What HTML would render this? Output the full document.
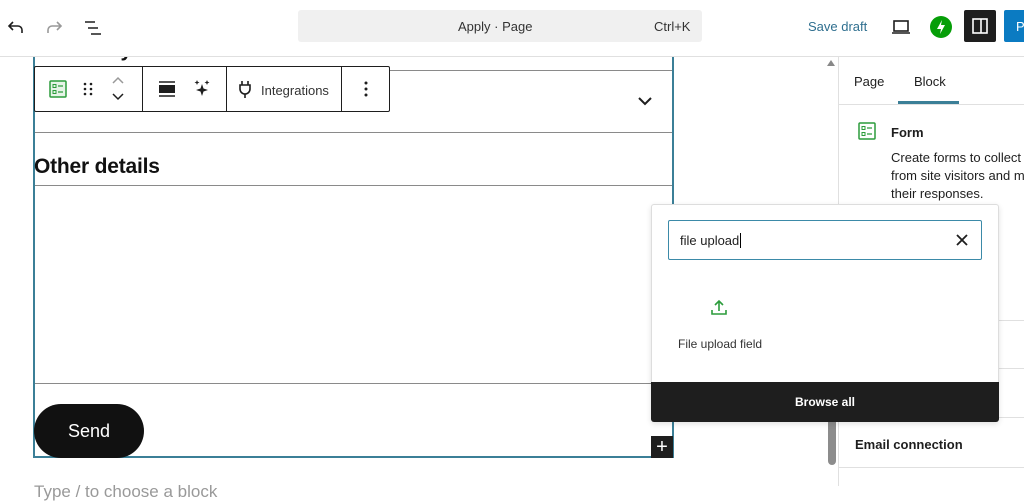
<!DOCTYPE html>
<html><head><style>
*{box-sizing:border-box;margin:0;padding:0}
body{width:1024px;height:486px;overflow:hidden;background:#fff;font-family:"Liberation Sans",sans-serif;position:relative;color:#1e1e1e}
.a{position:absolute}
.hl{position:absolute;height:1px;background:#8a8a8a}
.hd{z-index:10}
</style></head><body>
<!-- canvas -->
<div class="a" style="left:33px;top:38px;font-size:21px;font-weight:bold;color:#111">How did you hear about us?</div>
<div class="a" style="left:33px;top:46px;width:641px;height:412px;border:2px solid #3b7f97;border-top:none"></div>
<div class="hl" style="left:35px;top:70px;width:637px"></div>
<div class="hl" style="left:35px;top:132px;width:637px"></div>
<div class="hl" style="left:35px;top:185px;width:637px"></div>
<div class="hl" style="left:35px;top:383px;width:637px"></div>
<svg class="a" style="left:636px;top:95px" width="18" height="14" viewBox="0 0 18 14"><path d="M3 3l6 6 6-6" fill="none" stroke="#1e1e1e" stroke-width="2"/></svg>
<div class="a" style="left:34px;top:155px;font-size:21px;font-weight:bold;color:#111;letter-spacing:-0.2px">Other details</div>
<div class="a" style="left:34px;top:404px;width:110px;height:54px;border-radius:27px;background:#111;color:#fff;font-size:18px;text-align:center;line-height:54px">Send</div>
<div class="a" style="left:651px;top:436px;width:22px;height:22px;background:#1e1e1e;color:#fff;font-size:20px;text-align:center;line-height:22px">+</div>
<div class="a" style="left:34px;top:482px;font-size:17px;color:#999">Type / to choose a block</div>

<!-- header -->
<div class="a hd" style="left:0;top:0;width:1024px;height:57px;background:#fff;border-bottom:1px solid #e0e0e0"></div>
<svg class="a hd" style="left:4px;top:16px" width="24" height="24" viewBox="0 0 24 24"><path d="M18 17v-3a4 4 0 0 0-4-4H6M9 6l-4 4 4 4" fill="none" stroke="#1e1e1e" stroke-width="1.6"/></svg>
<svg class="a hd" style="left:42px;top:16px" width="24" height="24" viewBox="0 0 24 24"><path d="M6 17v-3a4 4 0 0 1 4-4h8M15 6l4 4-4 4" fill="none" stroke="#999" stroke-width="1.6"/></svg>
<svg class="a hd" style="left:82px;top:16px" width="24" height="24" viewBox="0 0 24 24"><path d="M3 6h10M6 12h10M9 18h10" stroke="#1e1e1e" stroke-width="1.6"/></svg>
<div class="a hd" style="left:298px;top:10px;width:404px;height:32px;background:#f0f0f0;border-radius:3px"></div>
<div class="a hd" style="left:458px;top:19px;font-size:13px;color:#333">Apply · Page</div>
<div class="a hd" style="left:654px;top:19px;font-size:13px;color:#333">Ctrl+K</div>
<div class="a hd" style="left:808px;top:19px;font-size:13px;color:#2f6f8f">Save draft</div>
<svg class="a hd" style="left:890px;top:16px" width="22" height="22" viewBox="0 0 22 22"><rect x="4" y="5" width="14" height="10" fill="none" stroke="#1e1e1e" stroke-width="1.6"/><path d="M2 17h18" stroke="#1e1e1e" stroke-width="1.6"/></svg>
<div class="a hd" style="left:930px;top:16px;width:22px;height:22px;border-radius:50%;background:#069e08"></div>
<svg class="a hd" style="left:930px;top:16px" width="22" height="22" viewBox="0 0 22 22"><path d="M12 4l-5 9h4l-1 5 5-9h-4z" fill="#fff"/></svg>
<div class="a hd" style="left:964px;top:10px;width:32px;height:32px;background:#1e1e1e;border-radius:2px"></div>
<svg class="a hd" style="left:970px;top:16px" width="20" height="20" viewBox="0 0 20 20"><rect x="3" y="3" width="14" height="14" fill="none" stroke="#fff" stroke-width="1.6"/><path d="M11 3v14" stroke="#fff" stroke-width="1.6"/></svg>
<div class="a hd" style="left:1004px;top:10px;width:30px;height:32px;background:#0b7bc2;border-radius:2px;color:#fff;font-size:13px;padding:9px 0 0 12px">P</div>

<!-- toolbar -->
<div class="a" style="left:34px;top:66px;width:356px;height:46px;background:#fff;border:1px solid #1e1e1e;border-radius:2px"></div>
<div class="a" style="left:142px;top:66px;width:1px;height:46px;background:#1e1e1e"></div>
<div class="a" style="left:226px;top:66px;width:1px;height:46px;background:#1e1e1e"></div>
<div class="a" style="left:341px;top:66px;width:1px;height:46px;background:#1e1e1e"></div>
<svg class="a" style="left:48px;top:79px" width="20" height="20" viewBox="0 0 20 20"><rect x="2" y="2" width="16" height="16" rx="1" fill="#e6f4e7" stroke="#2c9c3c" stroke-width="1.5"/><rect x="5" y="5.5" width="3" height="3" fill="none" stroke="#2c9c3c"/><rect x="5" y="11.5" width="3" height="3" fill="none" stroke="#2c9c3c"/><path d="M10 7h5M10 13h5" stroke="#2c9c3c" stroke-width="1.3"/></svg>
<svg class="a" style="left:80px;top:80px" width="16" height="18" viewBox="0 0 16 18"><g fill="#1e1e1e"><circle cx="5" cy="4" r="1.3"/><circle cx="11" cy="4" r="1.3"/><circle cx="5" cy="9" r="1.3"/><circle cx="11" cy="9" r="1.3"/><circle cx="5" cy="14" r="1.3"/><circle cx="11" cy="14" r="1.3"/></g></svg>
<svg class="a" style="left:110px;top:74px" width="16" height="30" viewBox="0 0 16 30"><path d="M3 9l5-5 5 5" fill="none" stroke="#999" stroke-width="1.5"/><path d="M3 20l5 5 5-5" fill="none" stroke="#1e1e1e" stroke-width="1.5"/></svg>
<svg class="a" style="left:157px;top:80px" width="20" height="18" viewBox="0 0 20 18"><path d="M2 2h16M2 16h16" stroke="#1e1e1e" stroke-width="1.5"/><rect x="2" y="5" width="16" height="8" fill="#1e1e1e"/></svg>
<svg class="a" style="left:192px;top:78px" width="20" height="20" viewBox="0 0 20 20"><path d="M10 6l1.5 4.5L16 12l-4.5 1.5L10 18l-1.5-4.5L4 12l4.5-1.5z" fill="#1e1e1e"/><path d="M5 2l.7 1.8L7.5 4.5l-1.8.7L5 7l-.7-1.8L2.5 4.5l1.8-.7zM15 2l.7 1.8 1.8.7-1.8.7L15 7l-.7-1.8-1.8-.7 1.8-.7z" fill="#1e1e1e"/></svg>
<svg class="a" style="left:236px;top:79px" width="18" height="20" viewBox="0 0 18 20"><path d="M6 2v4M12 2v4M4 6h10v4a5 5 0 0 1-10 0zM9 15v4" fill="none" stroke="#1e1e1e" stroke-width="1.6"/></svg>
<div class="a" style="left:261px;top:83px;font-size:13px;color:#333">Integrations</div>
<svg class="a" style="left:358px;top:79px" width="16" height="20" viewBox="0 0 16 20"><g fill="#1e1e1e"><circle cx="8" cy="4" r="1.5"/><circle cx="8" cy="10" r="1.5"/><circle cx="8" cy="16" r="1.5"/></g></svg>

<!-- scrollbar -->
<svg class="a" style="left:826px;top:59px" width="10" height="8" viewBox="0 0 10 8"><path d="M1 7l4-6 4 6z" fill="#888"/></svg>
<div class="a" style="left:828px;top:418px;width:8px;height:47px;background:#8c8c8c;border-radius:4px"></div>

<!-- sidebar -->
<div class="a" style="left:838px;top:57px;width:1px;height:429px;background:#e0e0e0"></div>
<div class="a" style="left:854px;top:74px;font-size:13px;color:#1e1e1e">Page</div>
<div class="a" style="left:914px;top:74px;font-size:13px;color:#1e1e1e">Block</div>
<div class="a" style="left:898px;top:101px;width:61px;height:3px;background:#3b7f97"></div>
<div class="a" style="left:839px;top:104px;width:185px;height:1px;background:#e0e0e0"></div>
<svg class="a" style="left:857px;top:121px" width="20" height="20" viewBox="0 0 20 20"><rect x="2" y="2" width="16" height="16" rx="1" fill="none" stroke="#2c9c3c" stroke-width="1.5"/><rect x="5" y="5.5" width="3" height="3" fill="none" stroke="#2c9c3c"/><rect x="5" y="11.5" width="3" height="3" fill="none" stroke="#2c9c3c"/><path d="M10 7h5M10 13h5" stroke="#2c9c3c" stroke-width="1.3"/></svg>
<div class="a" style="left:891px;top:125px;font-size:13px;font-weight:bold">Form</div>
<div class="a" style="left:891px;top:149px;font-size:13px;line-height:18px;color:#1e1e1e;white-space:nowrap">Create forms to collect data<br>from site visitors and manage<br>their responses.</div>
<div class="a" style="left:839px;top:320px;width:185px;height:1px;background:#e0e0e0"></div>
<div class="a" style="left:839px;top:368px;width:185px;height:1px;background:#e0e0e0"></div>
<div class="a" style="left:839px;top:417px;width:185px;height:1px;background:#e0e0e0"></div>
<div class="a" style="left:839px;top:467px;width:185px;height:1px;background:#e0e0e0"></div>
<div class="a" style="left:855px;top:437px;font-size:13px;font-weight:bold">Email connection</div>

<!-- popover -->
<div class="a" style="left:651px;top:204px;width:348px;height:218px;background:#fff;border:1px solid #ddd;border-radius:3px;box-shadow:0 2px 6px rgba(0,0,0,.12)"></div>
<div class="a" style="left:668px;top:220px;width:314px;height:40px;border:1.5px solid #3b8aa8;border-radius:2px"></div>
<div class="a" style="left:680px;top:233px;font-size:13px;color:#1e1e1e">file upload<span style="border-left:1px solid #000;margin-left:1px"></span></div>
<svg class="a" style="left:954px;top:232px" width="16" height="16" viewBox="0 0 16 16"><path d="M3 3l10 10M13 3L3 13" stroke="#1e1e1e" stroke-width="1.8"/></svg>
<svg class="a" style="left:709px;top:297px" width="20" height="20" viewBox="0 0 20 20"><path d="M10 14V4M6 8l4-4 4 4M3 13v4h14v-4" fill="none" stroke="#2c9c3c" stroke-width="1.6"/></svg>
<div class="a" style="left:678px;top:337px;font-size:12px;color:#333">File upload field</div>
<div class="a" style="left:651px;top:382px;width:348px;height:40px;background:#1e1e1e;border-radius:0 0 3px 3px;color:#fff;font-size:12px;font-weight:bold;text-align:center;line-height:40px">Browse all</div>
</body></html>
